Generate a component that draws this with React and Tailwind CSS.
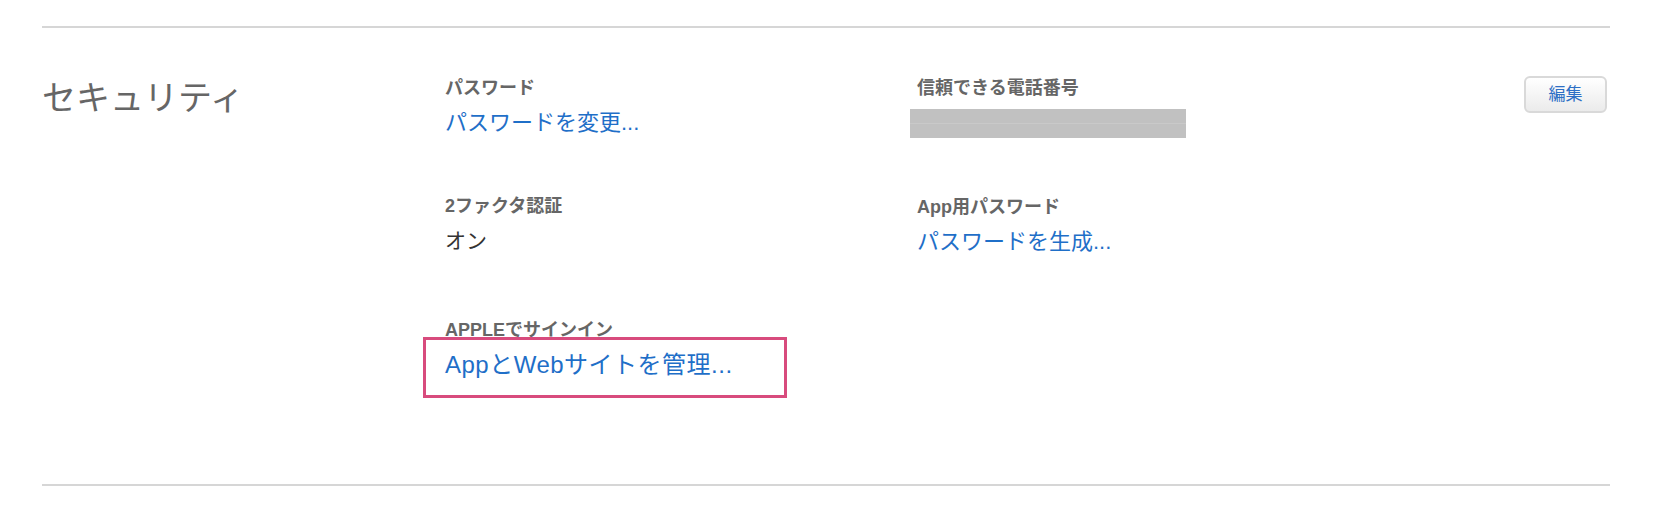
import React from 'react';

const FONT = { fontFamily: '"Liberation Sans", "Noto Sans CJK JP", sans-serif' };

function Field({ label, children, className = '' }) {
  return (
    <div className={className}>
      <div className="text-[18px] leading-[20px] font-bold text-[#666]">{label}</div>
      <div className="mt-[11px]">{children}</div>
    </div>
  );
}

function Link({ children, className = 'text-[22px]' }) {
  return <a href="#" className={`block leading-[28px] text-[#1f6fc8] ${className}`}>{children}</a>;
}

export default function App() {
  return (
    <div className="bg-white min-h-[508px] pl-[42px] pr-[46px] pt-[26px]" style={FONT}>
      <div className="border-t-2 border-[#d6d6d6]" />

      <div className="flex items-start pt-[50px] pb-[105px]">
        <h2 className="w-[403px] text-[34px] leading-[40px] text-[#666] font-normal">セキュリティ</h2>

        <div className="w-[472px]">
          <Field label="パスワード">
            <Link>パスワードを変更...</Link>
          </Field>
          <Field label="2ファクタ認証" className="mt-[59px]">
            <div className="text-[21px] leading-[28px] text-[#333]">オン</div>
          </Field>
          <Field label="APPLEでサインイン" className="mt-[65px]">
            <div className="relative">
              <Link className="text-[24px] tracking-[0.5px]">AppとWebサイトを管理...</Link>
              {/* annotation box */}
              <span className="absolute -left-[22px] -top-[14px] w-[364px] h-[61px] border-[3px] border-[#d84b7d] pointer-events-none" />
            </div>
          </Field>
        </div>

        <div className="flex-1">
          <Field label="信頼できる電話番号">
            <div className="-ml-[7px] h-[29px] w-[276px] bg-[#c1c1c1] flex flex-col justify-center">
              <div className="h-px bg-[#c9c9c9]" />
            </div>
          </Field>
          <Field label="App用パスワード" className="mt-[59px]">
            <Link>パスワードを生成...</Link>
          </Field>
        </div>

        <button className="-mt-[2px] mr-[3px] w-[83px] h-[37px] rounded-[6px] border-2 border-[#d9d9d9] bg-gradient-to-b from-white to-[#ebebeb] text-[17px] leading-none text-[#2d6fc5]">
          編集
        </button>
      </div>

      <div className="border-t-2 border-[#d6d6d6]" />
    </div>
  );
}
